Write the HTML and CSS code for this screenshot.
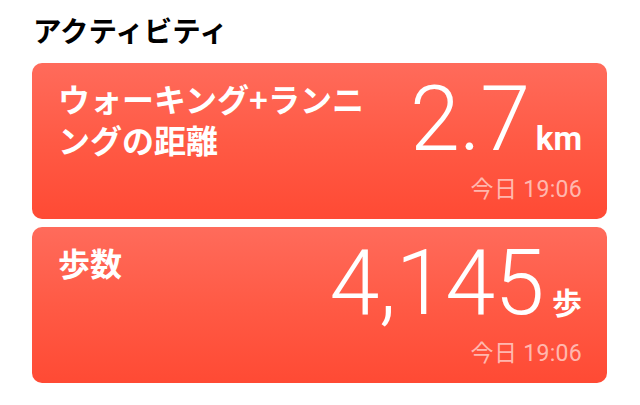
FILE: index.html
```html
<!DOCTYPE html>
<html lang="ja">
<head>
<meta charset="utf-8">
<link rel="stylesheet" href="styles.css">
</head>
<body>
<div class="page">
  <h1 class="heading">アクティビティ</h1>
  <div class="card">
    <div class="card-top">
      <div class="card-title wide">ウォーキング+ランニングの距離</div>
      <div class="value"><span class="num">2.7</span><span class="unit">km</span></div>
    </div>
    <div class="time">今日 19:06</div>
  </div>
  <div class="card">
    <div class="card-top">
      <div class="card-title">歩数</div>
      <div class="value"><span class="num">4,145</span><span class="unit unit-jp">歩</span></div>
    </div>
    <div class="time">今日 19:06</div>
  </div>
</div>
</body>
</html>
```
FILE: styles.css
```css
html, body {
  margin: 0;
  padding: 0;
  background: #ffffff;
}
.page {
  padding: 8px 33px 0 32px;
  font-family: "Noto Sans CJK JP", "Noto Sans", sans-serif;
}
.heading {
  margin: 0 0 12px 1px;
  font-size: 28.5px;
  line-height: 43px;
  font-weight: 700;
  color: #000;
}
.card {
  height: 156px;
  box-sizing: border-box;
  border-radius: 10px;
  background: linear-gradient(180deg, #ff6b5b 0%, #ff5a45 50%, #ff4a34 100%);
  margin-bottom: 8px;
  padding: 15px 25px 0 26px;
  display: flex;
  flex-direction: column;
  color: #fff;
}
.card-top {
  display: flex;
  justify-content: space-between;
  align-items: flex-start;
  height: 100px;
}
.card-title {
  font-size: 32px;
  line-height: 41px;
  font-weight: 700;
}
.card-title.wide {
  width: 330px;
}
.value {
  display: flex;
  align-items: baseline;
  font-family: "Roboto", "Noto Sans CJK JP", sans-serif;
  margin-top: -6px;
}
.num {
  font-size: 90px;
  font-weight: 300;
  line-height: 96px;
  letter-spacing: -0.5px;
}
.unit {
  font-size: 33px;
  font-weight: 700;
  margin-left: 6px;
}
.unit-jp {
  font-family: "Noto Sans CJK JP", sans-serif;
  font-size: 30px;
  margin-left: 8px;
}
.time {
  align-self: flex-end;
  font-family: "Roboto", "Noto Sans CJK JP", sans-serif;
  font-size: 23px;
  line-height: 30px;
  letter-spacing: 0.3px;
  color: rgba(255, 255, 255, 0.6);
  margin-top: -3px;
}
```
